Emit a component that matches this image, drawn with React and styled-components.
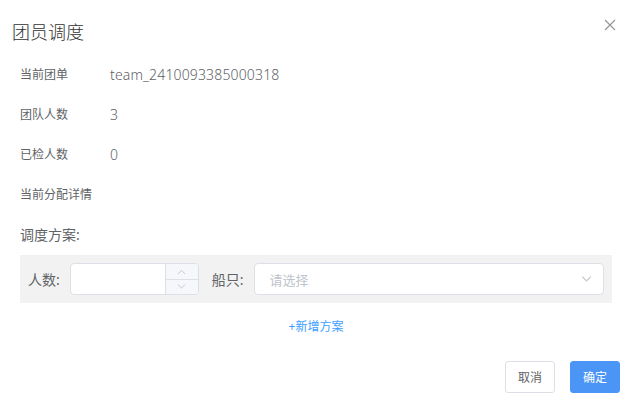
import React from "react";
import styled, { createGlobalStyle } from "styled-components";

const GlobalStyle = createGlobalStyle`
  body {
    margin: 0;
    background: #fff;
    font-family: "Noto Sans", "Noto Sans CJK SC", sans-serif;
  }
`;

const Dialog = styled.div`
  width: 629px;
  height: 402px;
  box-sizing: border-box;
  position: relative;
  background: #fff;
`;

const Header = styled.div`
  padding: 20px 12px 10px;
`;

const Title = styled.div`
  font-size: 18px;
  line-height: 24px;
  font-weight: 300;
  color: #303133;
`;

const Close = styled.button`
  position: absolute;
  top: 19px;
  right: 13px;
  width: 12px;
  height: 12px;
  padding: 0;
  border: none;
  background: none;
  display: flex;
`;

const Body = styled.div`
  padding: 0 17px 0 20px;
`;

const Row = styled.div`
  display: flex;
  align-items: center;
  height: 40px;
`;

const Label = styled.div`
  width: 90px;
  font-size: ${(p) => (p.big ? "14px" : "12px")};
  color: #606266;
`;

const Value = styled.div`
  font-size: 14px;
  font-weight: 300;
  letter-spacing: 0.15px;
  color: #606266;
`;

const Plan = styled.div`
  display: flex;
  align-items: center;
  margin-top: 1px;
  height: 48px;
  padding: 0 8px;
  background: #f2f2f2;
`;

const FieldLabel = styled.span`
  font-size: 14px;
  color: #606266;
  margin-right: ${(p) => p.gap}px;
  margin-left: ${(p) => p.lead || 0}px;
  white-space: nowrap;
`;

const NumberBox = styled.div`
  display: flex;
  width: 129px;
  height: 32px;
  box-sizing: border-box;
  border: 1px solid #dcdfe6;
  border-radius: 4px;
  background: #fff;
  overflow: hidden;
`;

const NumberInput = styled.div`
  flex: 1;
`;

const Controls = styled.div`
  width: 32px;
  display: flex;
  flex-direction: column;
  border-left: 1px solid #dcdfe6;
  background: #f5f7fa;
`;

const Step = styled.div`
  flex: 1;
  display: flex;
  align-items: center;
  justify-content: center;
  border-top: ${(p) => (p.down ? "1px solid #dcdfe6" : "none")};
`;

const Select = styled.div`
  flex: 1;
  display: flex;
  align-items: center;
  justify-content: space-between;
  height: 32px;
  box-sizing: border-box;
  padding: 0 11px 0 15px;
  border: 1px solid #dcdfe6;
  border-radius: 4px;
  background: #fff;
  font-size: 13px;
  color: #c0c4cc;
`;

const AddLink = styled.div`
  text-align: center;
  margin-top: 16px;
  font-size: 12px;
  line-height: 16px;
  color: #409eff;
`;

const Footer = styled.div`
  display: flex;
  justify-content: flex-end;
  gap: 15px;
  padding: 26px 9px 0 0;
`;

const Button = styled.button`
  height: 32px;
  width: 50px;
  padding: 0;
  box-sizing: border-box;
  border-radius: 3px;
  font-size: 12px;
  font-family: inherit;
  border: 1px solid ${(p) => (p.primary ? "#4b95f6" : "#dcdfe6")};
  background: ${(p) => (p.primary ? "#4b95f6" : "#fff")};
  color: ${(p) => (p.primary ? "#fff" : "#606266")};
`;

const Chevron = ({ up, size = 10 }) => (
  <svg width={size} height={size / 2 + 1} viewBox="0 0 10 6" fill="none">
    <path
      d={up ? "M1 5.5 5 1.5 9 5.5" : "M1 0.5 5 4.5 9 0.5"}
      stroke="#c0c4cc"
      strokeWidth="1"
    />
  </svg>
);

const info = [
  ["当前团单", "team_2410093385000318"],
  ["团队人数", "3"],
  ["已检人数", "0"],
  ["当前分配详情", ""],
];

export default function App() {
  return (
    <>
      <GlobalStyle />
      <Dialog>
        <Header>
          <Title>团员调度</Title>
        </Header>
        <Close>
          <svg width="12" height="12" viewBox="0 0 12 12">
            <path d="M1 1 11 11M11 1 1 11" stroke="#909399" strokeWidth="1.1" />
          </svg>
        </Close>
        <Body>
          {info.map(([k, v]) => (
            <Row key={k}>
              <Label>{k}</Label>
              <Value>{v}</Value>
            </Row>
          ))}
          <Row>
            <Label big>调度方案:</Label>
          </Row>
          <Plan>
            <FieldLabel gap={10}>人数:</FieldLabel>
            <NumberBox>
              <NumberInput />
              <Controls>
                <Step>
                  <Chevron up size={9} />
                </Step>
                <Step down>
                  <Chevron size={9} />
                </Step>
              </Controls>
            </NumberBox>
            <FieldLabel lead={13} gap={10}>船只:</FieldLabel>
            <Select>
              请选择
              <Chevron size={11} />
            </Select>
          </Plan>
          <AddLink>+新增方案</AddLink>
        </Body>
        <Footer>
          <Button>取消</Button>
          <Button primary>确定</Button>
        </Footer>
      </Dialog>
    </>
  );
}
